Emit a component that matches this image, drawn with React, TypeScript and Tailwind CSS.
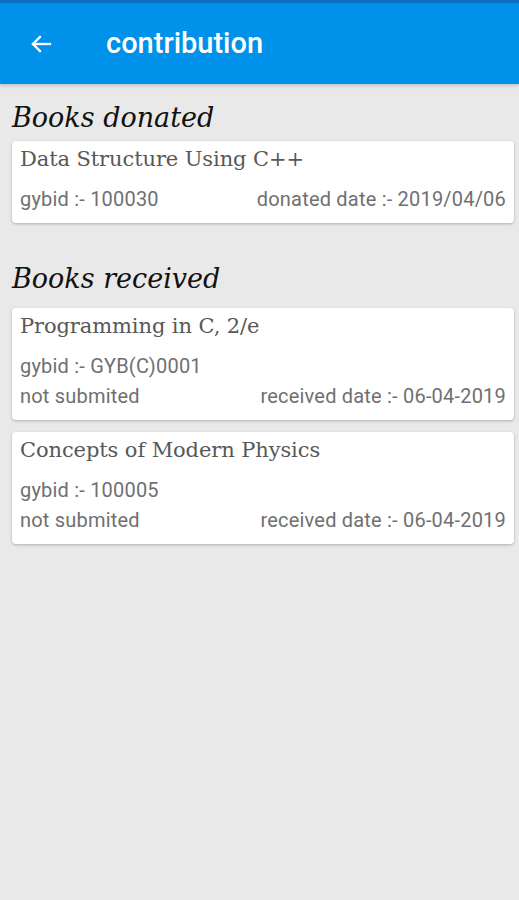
import React from "react";

const serif = { fontFamily: '"DejaVu Serif", "Liberation Serif", serif' };
const sans = { fontFamily: 'Roboto, "Noto Sans", sans-serif' };

function Card({ title, children }: { title: string; children: React.ReactNode }) {
  return (
    <div className="ml-3 mr-[5px] bg-white rounded-[4px] shadow-[0_1px_3px_rgba(0,0,0,0.25)] pl-[8px] pr-[8px] pt-[4px] pb-[9px]">
      <div className="text-[21px] leading-[28px] text-[#585858] tracking-[-0.1px]" style={serif}>
        {title}
      </div>
      <div className="mt-[11px] text-[20px] text-[#707070] leading-[30px] tracking-[0.2px]">{children}</div>
    </div>
  );
}

export default function App() {
  return (
    <div className="w-[519px] h-[900px] bg-[#e9e9e9] flex flex-col" style={sans}>
      <div className="h-[3px] bg-[#0b6fc4]" />
      <div className="h-[81px] bg-[#0091ea] flex items-center shadow-[0_2px_3px_rgba(0,0,0,0.15)]">
        <svg width="24" height="24" viewBox="0 0 24 24" className="ml-[29px]" fill="none" stroke="white" strokeWidth="2.3" strokeLinecap="square">
          <path d="M21 12H4" />
          <path d="M11 5l-7 7 7 7" />
        </svg>
        <div className="ml-[53px] text-white text-[29px] font-medium">contribution</div>
      </div>
      <div className="pl-[12px] pt-[14px] pb-[2px] text-[27px] italic text-[#111]" style={serif}>
        Books donated
      </div>
      <Card title="Data Structure Using C++">
        <div className="flex justify-between">
          <span>gybid :- 100030</span>
          <span>donated date :- 2019/04/06</span>
        </div>
      </Card>
      <div className="pl-[12px] pt-[36px] pb-[9px] text-[27px] italic text-[#111]" style={serif}>
        Books received
      </div>
      <div className="flex flex-col gap-3">
        <Card title="Programming in C, 2/e">
          <div>gybid :- GYB(C)0001</div>
          <div className="flex justify-between">
            <span>not submited</span>
            <span>received date :- 06-04-2019</span>
          </div>
        </Card>
        <Card title="Concepts of Modern Physics">
          <div>gybid :- 100005</div>
          <div className="flex justify-between">
            <span>not submited</span>
            <span>received date :- 06-04-2019</span>
          </div>
        </Card>
      </div>
    </div>
  );
}
